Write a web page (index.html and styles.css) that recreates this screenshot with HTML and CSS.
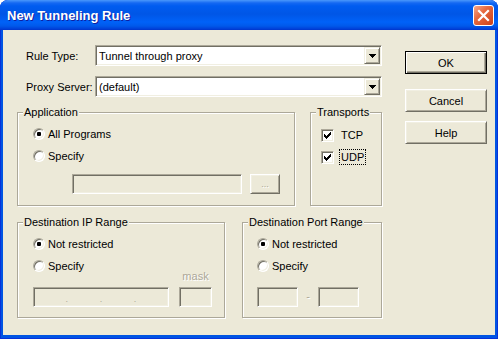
FILE: index.html
```html
<!DOCTYPE html>
<html lang="en">
<head>
    <meta charset="UTF-8">
    <title>New Tunneling Rule</title>
    <link rel="stylesheet" href="styles.css">
</head>
<body>
<div class="window">
    <div class="titlebar">
        <span class="title">New Tunneling Rule</span>
        <span class="close">
            <svg width="19" height="19" viewBox="0 0 19 19"><path d="M5 5L14 14M14 5L5 14" stroke="#fff" stroke-width="2.2" stroke-linecap="square"/></svg>
        </span>
    </div>
    <div class="client">
        <div class="form">
            <div class="field">
                <span class="field-label">Rule Type:</span>
                <div class="combo">
                    <span class="combo-text">Tunnel through proxy</span>
                    <span class="combo-btn"><svg width="7" height="4" viewBox="0 0 7 4" shape-rendering="crispEdges"><path d="M0 0H7V1H6V2H5V3H4V4H3V3H2V2H1V1H0Z"/></svg></span>
                </div>
            </div>
            <div class="field">
                <span class="field-label">Proxy Server:</span>
                <div class="combo">
                    <span class="combo-text">(default)</span>
                    <span class="combo-btn"><svg width="7" height="4" viewBox="0 0 7 4" shape-rendering="crispEdges"><path d="M0 0H7V1H6V2H5V3H4V4H3V3H2V2H1V1H0Z"/></svg></span>
                </div>
            </div>

            <div class="group-row first">
                <div class="group app-group">
                    <span class="legend">Application</span>
                    <div class="opt"><span class="radio checked"></span>All Programs</div>
                    <div class="opt"><span class="radio"></span>Specify</div>
                    <div class="app-row">
                        <div class="edit app-edit"></div>
                        <div class="btn small-btn disabled">...</div>
                    </div>
                </div>
                <div class="group transports">
                    <span class="legend">Transports</span>
                    <div class="opt"><span class="check"><svg width="9" height="9" viewBox="0 0 9 9" shape-rendering="crispEdges"><path d="M1 3H2V4H3V5H4V4H5V3H6V2H7V1H8V4H7V5H6V6H5V7H4V8H3V7H2V6H1Z"/></svg></span><span class="check-label">TCP</span></div>
                    <div class="opt"><span class="check"><svg width="9" height="9" viewBox="0 0 9 9" shape-rendering="crispEdges"><path d="M1 3H2V4H3V5H4V4H5V3H6V2H7V1H8V4H7V5H6V6H5V7H4V8H3V7H2V6H1Z"/></svg></span><span class="check-label focus">UDP</span></div>
                </div>
            </div>

            <div class="group-row second">
                <div class="group ip-group">
                    <span class="legend">Destination IP Range</span>
                    <div class="opt"><span class="radio checked"></span>Not restricted</div>
                    <div class="opt"><span class="radio"></span>Specify</div>
                    <div class="ip-row">
                        <div class="edit ip-edit">
                            <span class="dot">.</span><span class="dot">.</span><span class="dot">.</span>
                        </div>
                        <div class="mask-col">
                            <span class="mask-label">mask</span>
                            <div class="edit mask-edit"></div>
                        </div>
                    </div>
                </div>
                <div class="group port-group">
                    <span class="legend">Destination Port Range</span>
                    <div class="opt"><span class="radio checked"></span>Not restricted</div>
                    <div class="opt"><span class="radio"></span>Specify</div>
                    <div class="port-row">
                        <div class="edit port-edit"></div>
                        <span class="dash">-</span>
                        <div class="edit port-edit"></div>
                    </div>
                </div>
            </div>
        </div>

        <div class="buttons">
            <div class="btn default">OK</div>
            <div class="btn cancel">Cancel</div>
            <div class="btn help">Help</div>
        </div>
    </div>
</div>
</body>
</html>
```

FILE: styles.css
```css
body, html {
    margin: 0;
    padding: 0;
    background: #fff;
}

body {
    font-family: "Liberation Sans", Arial, sans-serif;
    font-size: 11px;
    color: #000;
}

.window {
    width: 498px;
    height: 339px;
    box-sizing: border-box;
    display: flex;
    flex-direction: column;
    background: #0054e3;
    border-radius: 8px 8px 0 0;
    overflow: hidden;
    box-shadow: inset 0 0 0 1px #0831d9;
}

/* barra de titulo estilo XP */
.titlebar {
    height: 30px;
    flex: none;
    display: flex;
    align-items: center;
    justify-content: space-between;
    padding: 0 4px 0 7px;
    background: linear-gradient(to bottom, #4a98fb 0px, #1468f2 3px, #005cf0 6px, #0056e6 14px, #0062f8 22px, #0059ea 26px, #003fd8 29px, #0034c9 30px);
}

.title {
    color: #fff;
    font-weight: bold;
    font-size: 13px;
    padding-top: 1px;
    text-shadow: 1px 1px 0 #0f1fa0;
}

.close {
    width: 21px;
    height: 21px;
    box-sizing: border-box;
    border: 1px solid #fff;
    border-radius: 3px;
    background: linear-gradient(135deg, #f6a88b 0%, #e6693f 40%, #cc4119 100%);
    display: flex;
    align-items: center;
    justify-content: center;
}

.close svg {
    display: block;
}

.client {
    flex: 1;
    margin: 0 3px 4px;
    background: #ece9d8;
    display: flex;
}

.form {
    width: 365px;
    margin: 15px 0 0 14px;
    display: flex;
    flex-direction: column;
}

.field {
    display: flex;
    align-items: center;
    height: 21px;
}

.field + .field {
    margin-top: 10px;
}

.field-label {
    width: 78px;
    padding-left: 9px;
    box-sizing: border-box;
}

/* controles clasicos (hundidos y elevados) */
.combo {
    flex: 1;
    height: 21px;
    box-sizing: border-box;
    border: 1px solid;
    border-color: #aca899 #fff #fff #aca899;
    box-shadow: inset 1px 1px 0 #716f64, inset -1px -1px 0 #f1efe2;
    background: #fff;
    display: flex;
    align-items: center;
    padding: 1px;
}

.combo-text {
    padding-left: 2px;
}

.combo-btn {
    margin-left: auto;
    width: 16px;
    height: 17px;
    box-sizing: border-box;
    background: #ece9d8;
    border: 1px solid;
    border-color: #f1efe2 #716f64 #716f64 #f1efe2;
    box-shadow: inset 1px 1px 0 #fff, inset -1px -1px 0 #aca899;
    display: flex;
    align-items: center;
    justify-content: center;
}

.combo-btn svg {
    display: block;
}

.edit {
    height: 20px;
    box-sizing: border-box;
    border: 1px solid;
    border-color: #aca899 #fff #fff #aca899;
    box-shadow: inset 1px 1px 0 #716f64, inset -1px -1px 0 #f1efe2;
    background: #ece9d8;
}

.group-row {
    display: flex;
    justify-content: space-between;
}

.group-row.first {
    margin-top: 15px;
}

.group-row.second {
    margin-top: 16px;
}

.group {
    position: relative;
    box-sizing: border-box;
    border: 1px solid #aca899;
    box-shadow: inset 1px 1px 0 #fff, 1px 1px 0 #fff;
}

.legend {
    position: absolute;
    top: -7px;
    left: 5px;
    padding: 0 1px;
    line-height: 13px;
    background: #ece9d8;
}

.opt {
    display: flex;
    align-items: center;
    height: 16px;
}

.opt + .opt {
    margin-top: 6px;
}

.radio {
    width: 12px;
    height: 12px;
    box-sizing: border-box;
    border-radius: 50%;
    border: 1px solid;
    border-color: #aca899 #fff #fff #aca899;
    box-shadow: inset 1px 1px 0 #716f64, inset -1px -1px 0 #f1efe2;
    background: #fff;
    margin-right: 3px;
    display: flex;
    align-items: center;
    justify-content: center;
}

.radio.checked::after {
    content: "";
    width: 4px;
    height: 4px;
    border-radius: 1px;
    background: #000;
}

.check {
    width: 13px;
    height: 13px;
    box-sizing: border-box;
    border: 1px solid;
    border-color: #aca899 #fff #fff #aca899;
    box-shadow: inset 1px 1px 0 #716f64, inset -1px -1px 0 #f1efe2;
    background: #fff;
    display: flex;
    align-items: center;
    justify-content: center;
}

.check svg {
    display: block;
}

.check-label {
    margin-left: 5px;
    padding: 1px;
    border: 1px solid transparent;
}

.check-label.focus {
    border: 1px dotted #000;
}

.app-group {
    width: 278px;
    height: 94px;
    padding: 13px 0 0 15px;
}

.app-row {
    display: flex;
    margin: 10px 0 0 39px;
}

.app-edit {
    width: 170px;
}

.transports {
    width: 72px;
    height: 94px;
    padding: 14px 0 0 10px;
}

.ip-group {
    width: 208px;
    height: 96px;
    padding: 13px 0 0 15px;
}

.ip-row {
    display: flex;
    align-items: flex-end;
    margin-top: -4px;
}

.ip-edit {
    width: 136px;
    display: flex;
    justify-content: space-evenly;
    align-items: flex-end;
}

.dot {
    color: #aca899;
    font-size: 9px;
    line-height: 14px;
}

.mask-col {
    display: flex;
    flex-direction: column;
    align-items: center;
    margin-left: 10px;
}

.mask-label {
    line-height: 13px;
    margin-bottom: 4px;
    color: #aca899;
    text-shadow: 1px 1px 0 #fff;
}

.mask-edit {
    width: 33px;
}

.port-group {
    width: 140px;
    height: 96px;
    padding: 13px 0 0 14px;
}

.port-row {
    display: flex;
    margin-top: 13px;
}

.port-edit {
    width: 41px;
}

.dash {
    width: 20px;
    text-align: center;
    line-height: 18px;
    color: #aca899;
    text-shadow: 1px 1px 0 #fff;
}

/* botones */
.buttons {
    width: 82px;
    margin-left: 23px;
    padding-top: 21px;
    display: flex;
    flex-direction: column;
}

.btn {
    height: 23px;
    box-sizing: border-box;
    border: 1px solid;
    border-color: #fff #716f64 #716f64 #fff;
    box-shadow: inset 1px 1px 0 #f1efe2, inset -1px -1px 0 #aca899;
    background: #ece9d8;
    display: flex;
    align-items: center;
    justify-content: center;
}

.btn.default {
    border: 1px solid #000;
    box-shadow: inset 1px 1px 0 #fff, inset -1px -1px 0 #716f64, inset -2px -2px 0 #aca899;
}

.btn.cancel {
    margin-top: 15px;
}

.btn.help {
    margin-top: 9px;
}

.small-btn {
    width: 30px;
    height: 20px;
    margin-left: 8px;
}

.btn.disabled {
    color: #aca899;
    text-shadow: 1px 1px 0 #fff;
    font-size: 9px;
}
```
